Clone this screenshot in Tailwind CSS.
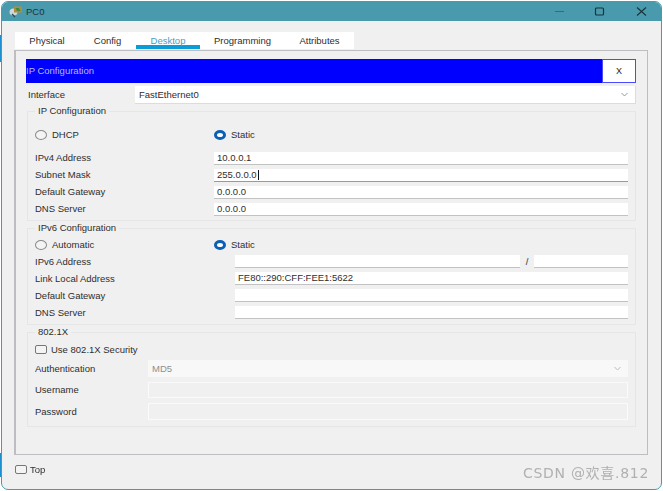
<!DOCTYPE html>
<html lang="en">
<head>
<meta charset="utf-8">
<title>PC0</title>
<script src="https://cdn.jsdelivr.net/npm/@tailwindcss/browser@4"></script>
</head>
<body class="relative w-[663px] h-[491px] overflow-hidden bg-white font-['Liberation_Sans',Arial,sans-serif] text-[9.5px] leading-none text-[#2e2e2e]">
<div class="absolute left-0 top-[35px] w-[1px] h-[27px] bg-[#1f8fd0]"></div>
<div class="absolute left-0 top-[453px] w-[1px] h-[24px] bg-[#1f8fd0]"></div>
<div class="relative ml-[1px] mt-[1px] w-[661px] h-[489px] flex flex-col rounded-t-[7px] rounded-b-[7px] border border-[#4a9aad] bg-[#f0f0f0] overflow-hidden blur-[0.3px]">
  <!-- title bar -->
  <div class="h-[19px] shrink-0 bg-[#4a9aad] flex items-center pl-[7px] pr-[14px]">
    <svg class="w-[14px] h-[13px]" viewBox="0 0 14 13">
      <ellipse cx="4.5" cy="7" rx="4" ry="3.5" fill="#c9d8dc"/>
      <rect x="5" y="1.5" width="8" height="6" fill="#b58a3c"/>
      <path d="M6.5 3 L10 3 L11.5 6 L8 6 Z" fill="#3c8a3c"/>
      <path d="M3 9 L6 12" stroke="#2a4a50" stroke-width="1.3"/>
    </svg>
    <span class="ml-[3px] text-[9.5px] text-[#1f3238]">PC0</span>
    <div class="ml-auto flex items-center">
      <svg class="w-[11px] h-[11px]" viewBox="0 0 11 11"><path d="M1 5.5H10" stroke="#2f6f7d" stroke-width="1.2"/></svg>
      <svg class="ml-[29px] w-[11px] h-[11px]" viewBox="0 0 11 11"><rect x="1.5" y="2" width="8" height="7" rx="1" fill="none" stroke="#17333b" stroke-width="1.2"/></svg>
      <svg class="ml-[31px] w-[11px] h-[11px]" viewBox="0 0 11 11"><path d="M1 1.5L10 9.5M10 1.5L1 9.5" stroke="#17333b" stroke-width="1.1"/></svg>
    </div>
  </div>
  <!-- tabs -->
  <div class="ml-[13px] mt-[11px] w-[339px] h-[17px] shrink-0 bg-white flex">
    <div class="w-[64px] pt-[4px] text-center">Physical</div>
    <div class="w-[57px] pt-[4px] text-center">Config</div>
    <div class="w-[64px] pt-[4px] text-center text-[#4a9cc4] border-b-[4px] border-[#0b9bd7]">Desktop</div>
    <div class="w-[85px] pt-[4px] text-center">Programming</div>
    <div class="w-[69px] pt-[4px] text-center">Attributes</div>
  </div>
  <!-- panel -->
  <div class="ml-[12px] mt-[1px] w-[634px] h-[405px] shrink-0 border border-[#bdbdc2] border-l-2 pl-[10px] pt-[8px]">
    <div class="w-[610px] h-[24px] bg-[#0000ff] flex items-center justify-between">
      <span class="text-[#b8b8f0]">IP Configuration</span>
      <div class="w-[34px] h-[24px] bg-white border border-[#4a4aff] flex items-center justify-center text-[9px] text-[#222]">X</div>
    </div>
    <div class="mt-[3px] h-[18px] flex items-center">
      <span class="w-[109px] pl-[2px]">Interface</span>
      <div class="w-[501px] h-[18px] bg-white border-b border-r border-[#dcdcdc] flex items-center justify-between pl-[4px] pr-[7px]">
        <span>FastEthernet0</span>
        <svg class="w-[7px] h-[5px]" viewBox="0 0 7 5"><path d="M0.5 1L3.5 4L6.5 1" fill="none" stroke="#999" stroke-width="1"/></svg>
      </div>
    </div>

    <!-- IP Configuration -->
    <div class="relative mt-[7px] ml-[1px] w-[609px] h-[110px] border border-[#e6e6e6] pl-[7px] pt-[18px]">
      <span class="absolute left-[7px] top-[-6px] bg-[#f0f0f0] px-[3px]">IP Configuration</span>
      <div class="flex items-center h-[10px]">
        <div class="w-[179px] flex items-center gap-[5px]">
          <span class="w-[12px] h-[10px] rounded-[50%] border border-[#8a8a8a] bg-[#f4f4f4]"></span><span>DHCP</span>
        </div>
        <div class="flex items-center gap-[5px]">
          <span class="w-[12px] h-[10px] rounded-[50%] border-[3px] border-[#0b5fb4] bg-white"></span><span>Static</span>
        </div>
      </div>
      <div class="mt-[12px] grid grid-cols-[179px_414px] gap-y-[4px] items-center">
        <span class="-mt-[1px]">IPv4 Address</span>
        <div class="h-[13px] bg-white border-b border-[#c2c2c2] pl-[3px] flex items-center">10.0.0.1</div>
        <span class="-mt-[1px]">Subnet Mask</span>
        <div class="h-[13px] bg-white border-b border-[#6aa6dc] pl-[3px] flex items-center"><span class="border-r border-[#111] pr-[1px] h-[10px] flex items-center">255.0.0.0</span></div>
        <span class="-mt-[1px]">Default Gateway</span>
        <div class="h-[13px] bg-white border-b border-[#c2c2c2] pl-[3px] flex items-center">0.0.0.0</div>
        <span class="-mt-[1px]">DNS Server</span>
        <div class="h-[13px] bg-white border-b border-[#c2c2c2] pl-[3px] flex items-center">0.0.0.0</div>
      </div>
    </div>

    <!-- IPv6 Configuration -->
    <div class="relative mt-[7px] ml-[1px] w-[609px] h-[97px] border border-[#e6e6e6] pl-[7px] pt-[11px]">
      <span class="absolute left-[7px] top-[-6px] bg-[#f0f0f0] px-[3px]">IPv6 Configuration</span>
      <div class="flex items-center h-[10px]">
        <div class="w-[179px] flex items-center gap-[5px]">
          <span class="w-[12px] h-[10px] rounded-[50%] border border-[#8a8a8a] bg-[#f4f4f4]"></span><span>Automatic</span>
        </div>
        <div class="flex items-center gap-[5px]">
          <span class="w-[12px] h-[10px] rounded-[50%] border-[3px] border-[#0b5fb4] bg-white"></span><span>Static</span>
        </div>
      </div>
      <div class="mt-[5px] grid grid-cols-[200px_393px] gap-y-[4px] items-center">
        <span>IPv6 Address</span>
        <div class="flex items-center">
          <div class="w-[285px] h-[13px] bg-white border-b border-[#c2c2c2]"></div>
          <span class="w-[14px] text-center">/</span>
          <div class="w-[94px] h-[13px] bg-white border-b border-[#c2c2c2]"></div>
        </div>
        <span>Link Local Address</span>
        <div class="h-[13px] bg-white border-b border-[#c2c2c2] pl-[3px] flex items-center">FE80::290:CFF:FEE1:5622</div>
        <span>Default Gateway</span>
        <div class="h-[13px] bg-white border-b border-[#c2c2c2]"></div>
        <span>DNS Server</span>
        <div class="h-[13px] bg-white border-b border-[#c2c2c2]"></div>
      </div>
    </div>

    <!-- 802.1X -->
    <div class="relative mt-[7px] ml-[1px] w-[609px] h-[95px] border border-[#e6e6e6] pl-[7px] pt-[12px]">
      <span class="absolute left-[7px] top-[-6px] bg-[#f0f0f0] px-[3px]">802.1X</span>
      <div class="flex items-center gap-[4px] h-[9px]">
        <span class="w-[12px] h-[9px] rounded-[2px] border border-[#777] bg-[#f4f4f4]"></span><span>Use 802.1X Security</span>
      </div>
      <div class="mt-[6px] grid grid-cols-[113px_480px] gap-y-[5px] items-center">
        <span>Authentication</span>
        <div class="h-[17px] bg-[#f8f8f8] pl-[4px] pr-[7px] flex items-center justify-between text-[#8f8f8f]">
          <span>MD5</span>
          <svg class="w-[7px] h-[5px]" viewBox="0 0 7 5"><path d="M0.5 1L3.5 4L6.5 1" fill="none" stroke="#bbb" stroke-width="1"/></svg>
        </div>
        <span>Username</span>
        <div class="h-[16px] border border-[#fafafa] bg-[#f0f0f0]"></div>
        <span>Password</span>
        <div class="h-[17px] border border-[#fafafa] bg-[#f0f0f0]"></div>
      </div>
    </div>
  </div>
  <!-- footer -->
  <div class="relative ml-[13px] mt-[10px] flex items-center gap-[3px] h-[9px]">
    <span class="w-[12px] h-[9px] rounded-[2px] border border-[#777] bg-[#f4f4f4]"></span><span>Top</span>
  </div>
  <div class="absolute right-[12px] top-[463px] text-[14px] tracking-[0.7px] text-[#b0b0b0] font-['DejaVu_Sans','Noto_Sans_CJK_SC',sans-serif]">CSDN @<span class="font-['Noto_Sans_CJK_SC',sans-serif]">欢喜</span>.812</div>
</div>
</body>
</html>
